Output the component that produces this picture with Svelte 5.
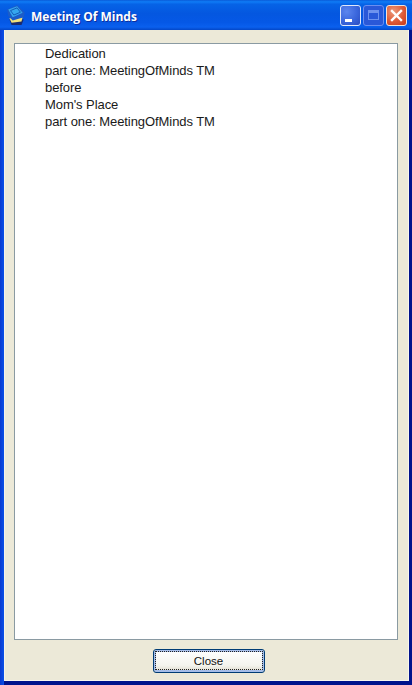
<script>
	const lines = ['Dedication', 'part one: MeetingOfMinds TM', 'before', "Mom's Place", 'part one: MeetingOfMinds TM'];
</script>

<div class="window">
	<header class="titlebar">
		<svg class="app-icon" width="22" height="22" viewBox="0 0 20 20">
			<path d="M4 14 L17 14 L15 19 L6 19 Z" fill="#1a2a70" />
			<path d="M4 13 L16 12 L15 16 L6 17 Z" fill="#f3e27a" />
			<path d="M2 5 L11 1 L18 8 L17 12 L7 15 L3 11 Z" fill="#1c5cc8" />
			<path d="M3 5 L11 2 L16 8 L7 12 Z" fill="#35a6ee" />
			<path d="M5 6 L11 3.5 L14 7.5 L8 10 Z" fill="none" stroke="#0f4fb0" stroke-width="0.8" />
		</svg>
		<span class="title">Meeting Of Minds</span>
		<div class="controls">
			<button class="ctl min" aria-label="Minimize"><span class="min-bar"></span></button>
			<button class="ctl max" aria-label="Maximize" disabled><span class="max-box"></span></button>
			<button class="ctl close" aria-label="Close window">
				<svg width="13" height="13" viewBox="0 0 13 13">
					<path d="M2 2 L11 11 M11 2 L2 11" stroke="#fff" stroke-width="2.4" stroke-linecap="square" />
				</svg>
			</button>
		</div>
	</header>
	<div class="body">
		<div class="list">
			{#each lines as line}
				<div class="item">{line}</div>
			{/each}
		</div>
		<div class="footer">
			<button class="close-btn"><span class="focus">Close</span></button>
		</div>
	</div>
</div>

<style>
	:global(body) {
		margin: 0;
		background: #ece9d8;
	}
	.window {
		width: 412px;
		height: 685px;
		display: flex;
		flex-direction: column;
		box-sizing: border-box;
		font-family: "Liberation Sans", Arial, sans-serif;
		background: linear-gradient(to right, #0a3ad0 0, #0a50e8 4px, #0a2cb0 4px, #00138c 100%);
		overflow: hidden;
	}
	.titlebar {
		height: 30px;
		flex: none;
		display: flex;
		align-items: center;
		box-sizing: border-box;
		padding: 0 5px 0 5px;
		background: linear-gradient(to bottom, #0a5bd8 0%, #0f7cf6 6%, #0663e6 14%, #0457e0 45%, #0558e6 75%, #0a60ee 90%, #0347c8 100%);
	}
	.app-icon {
		flex: none;
		margin-right: 4px;
	}
	.title {
		flex: 1;
		color: #fff;
		font-family: "Open Sans", "DejaVu Sans", sans-serif;
		font-size: 12px;
		font-weight: 700;
		padding-top: 2px;
		text-shadow: 1px 1px 0 #0f2f9c;
	}
	.controls {
		display: flex;
		gap: 2px;
	}
	.ctl {
		width: 21px;
		height: 21px;
		padding: 0;
		box-sizing: border-box;
		border: 1px solid #dfe8fb;
		border-radius: 3px;
		display: flex;
		align-items: center;
		justify-content: center;
		position: relative;
		background: radial-gradient(circle at 30% 30%, #5c86ee 0%, #3a66dc 55%, #2a4cc0 100%);
	}
	.min-bar {
		position: absolute;
		left: 4px;
		bottom: 3px;
		width: 7px;
		height: 3px;
		background: #fff;
	}
	.max {
		background: #2a58d8;
		border-color: #6a8ef0;
	}
	.max-box {
		width: 11px;
		height: 10px;
		box-sizing: border-box;
		border: 1px solid #6f92ee;
		border-top-width: 3px;
	}
	.close {
		background: radial-gradient(circle at 35% 30%, #ec9a7c 0%, #de5a36 55%, #c83a1a 100%);
		border-color: #f0e4dc;
	}
	.body {
		flex: 1;
		min-height: 0;
		display: flex;
		flex-direction: column;
		box-sizing: border-box;
		margin: 0 3px 0 4px;
		border-bottom: 4px solid #00138c;
		padding: 13px 0 0 10px;
		background: #ece9d8;
		box-shadow: inset 1px 0 0 #f4f2ea, inset -1px -1px 0 #f8f6ee;
	}
	.list {
		flex: 1;
		min-height: 0;
		margin-right: 11px;
		box-sizing: border-box;
		border: 1px solid #8a9aa2;
		background: #fff;
		padding: 1px 0 0 30px;
	}
	.item {
		font-size: 13px;
		line-height: 17px;
		letter-spacing: -0.07px;
		color: #1a1a1a;
	}
	.footer {
		height: 41px;
		flex: none;
		display: flex;
		justify-content: center;
		padding: 9px 6px 0 0;
		box-sizing: border-box;
	}
	.close-btn {
		width: 112px;
		height: 24px;
		padding: 1px 1px 2px;
		box-sizing: border-box;
		border: 1px solid #003c74;
		border-radius: 3px;
		background: linear-gradient(to bottom, #fff 0%, #f4f4ee 70%, #dcd8ca 100%);
		box-shadow: inset 0 0 0 2px #a6bde8;
		font-family: "Liberation Sans", Arial, sans-serif;
		font-size: 11.5px;
		color: #111;
	}
	.focus {
		display: flex;
		align-items: center;
		justify-content: center;
		height: 100%;
		box-sizing: border-box;
		border: 1px dotted #222;
	}
</style>
